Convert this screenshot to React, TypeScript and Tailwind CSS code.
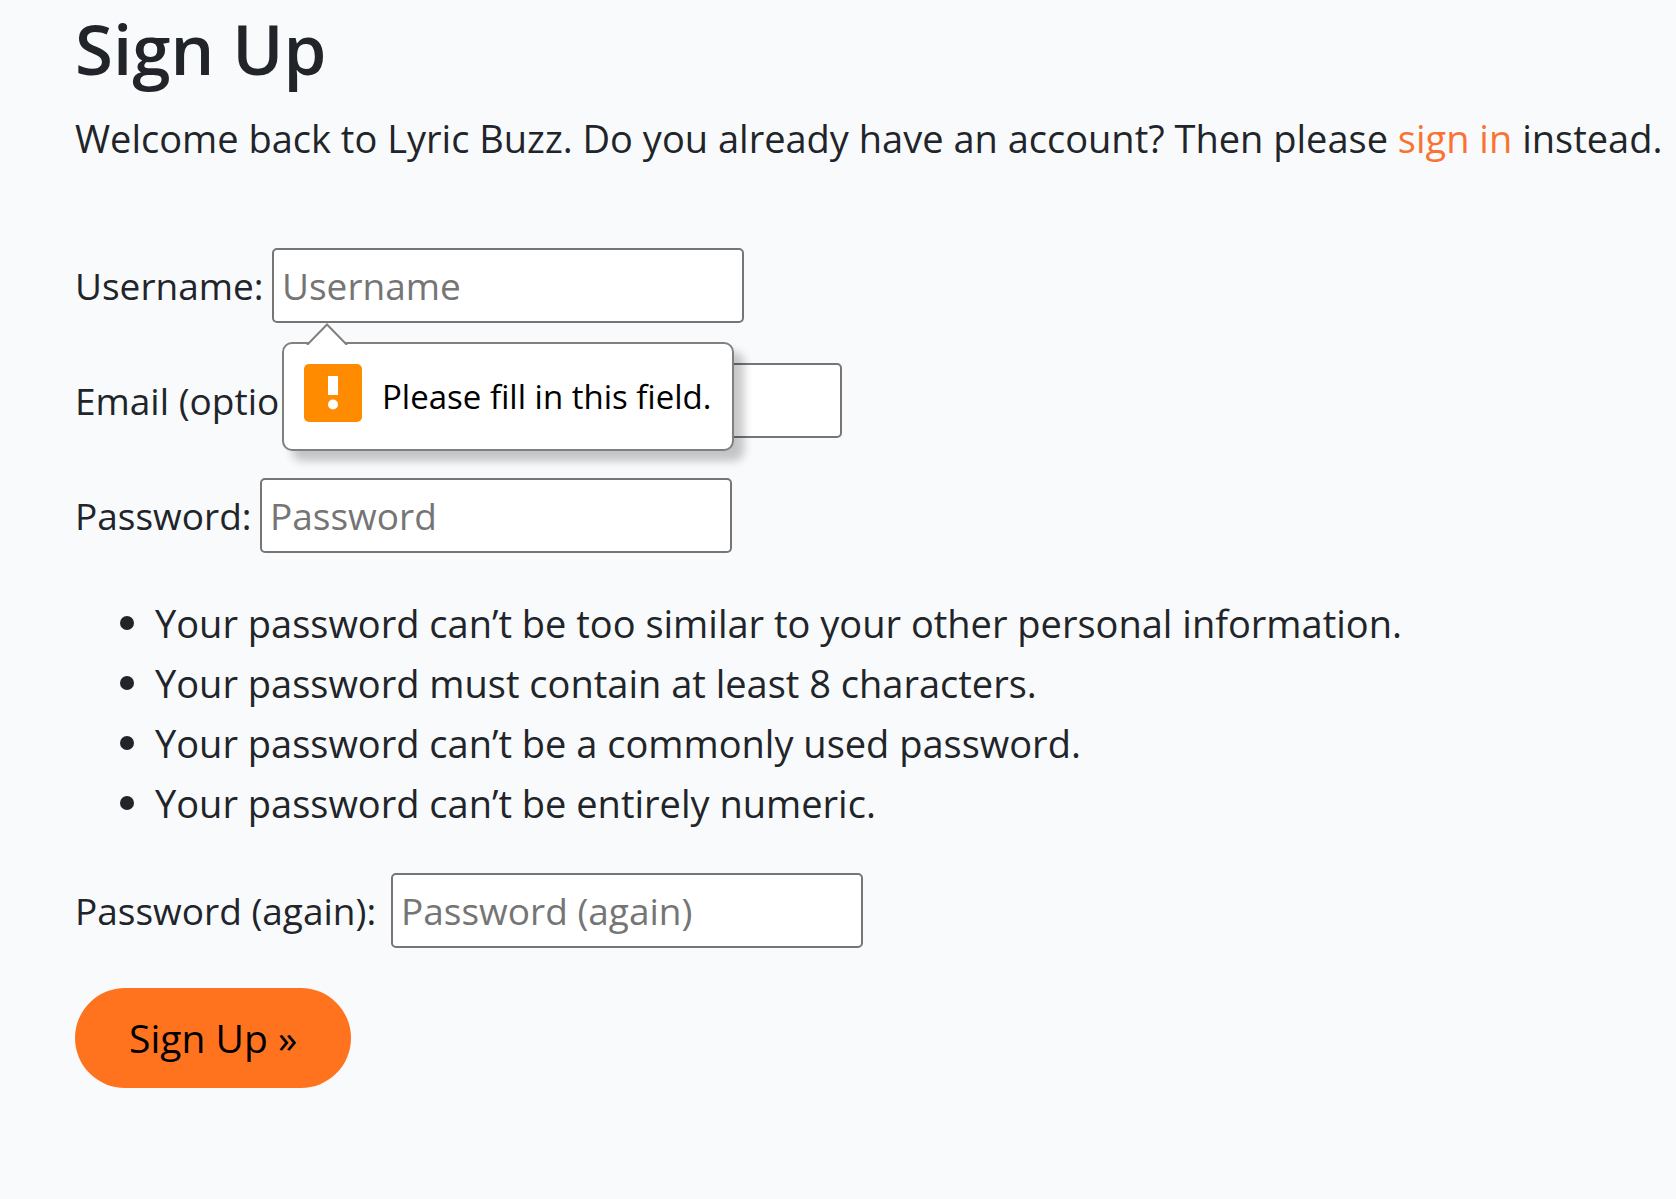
import type { ReactNode } from 'react';

const rules = [
  'Your password can’t be too similar to your other personal information.',
  'Your password must contain at least 8 characters.',
  'Your password can’t be a commonly used password.',
  'Your password can’t be entirely numeric.',
];

type FieldProps = {
  id: string;
  label: string;
  labelWidth: string;
  type: string;
  placeholder: string;
  children?: ReactNode;
};

function Field({ id, label, labelWidth, type, placeholder, children }: FieldProps) {
  return (
    <div className="flex items-center gap-2.5 text-[37px]">
      <label htmlFor={id} className={`whitespace-nowrap ${labelWidth}`}>
        {label}
      </label>
      <div className="relative">
        <input
          id={id}
          type={type}
          placeholder={placeholder}
          className="block h-[75px] w-[472px] rounded-[5px] border-2 border-[#767676] bg-white px-2 leading-[60px] placeholder:text-[#757575]"
        />
        {children}
      </div>
    </div>
  );
}

function ValidationBubble() {
  return (
    <div
      role="alert"
      className="absolute top-[94px] left-[10px] z-10 flex h-[109px] w-[452px] items-start gap-5 rounded-[10px] border-2 border-[#808080] bg-white p-5 text-[33px] leading-[66px] text-black shadow-[10px_10px_10px_rgba(0,0,0,0.22)]"
    >
      <svg className="absolute -top-[21px] left-[22px]" width="42" height="22" viewBox="0 0 42 22" aria-hidden="true">
        <path d="M1 22 L21 1.5 L41 22" fill="#fff" stroke="#808080" strokeWidth="2" />
      </svg>
      <svg className="shrink-0" width="58" height="58" viewBox="0 0 58 58" aria-hidden="true">
        <rect width="58" height="58" rx="5" fill="#ff8c00" />
        <rect x="24" y="12" width="10" height="19" fill="#fff" />
        <circle cx="29" cy="40.5" r="5" fill="#fff" />
      </svg>
      <span className="whitespace-nowrap">Please fill in this field.</span>
    </div>
  );
}

export default function App() {
  return (
    <main className="min-h-screen bg-[#f9fafc] pl-[75px] pb-28 font-['Open_Sans',sans-serif] text-[38px] leading-[60px] text-[#212529]">
      <h1 className="pt-1.5 text-[69px] leading-[84px] font-semibold">Sign Up</h1>
      <p className="mt-[18px] whitespace-nowrap">
        Welcome back to Lyric Buzz. Do you already have an account? Then please{' '}
        <a href="#signin" className="text-[#f97432]">
          sign in
        </a>{' '}
        instead.
      </p>
      <form className="mt-20 flex flex-col items-start gap-10" noValidate>
        <Field id="username" label="Username:" labelWidth="w-[187px]" type="text" placeholder="Username">
          <ValidationBubble />
        </Field>
        <Field id="email" label="Email (optional):" labelWidth="w-[285px]" type="email" placeholder="Email address" />
        <Field id="password" label="Password:" labelWidth="w-[175px]" type="password" placeholder="Password" />
        <ul className="flex flex-col">
          {rules.map((rule) => (
            <li key={rule} className="flex items-center gap-[21px] pl-[45px]">
              <span className="size-[14px] shrink-0 rounded-full bg-[#212529]" />
              {rule}
            </li>
          ))}
        </ul>
        <Field
          id="password2"
          label="Password (again):"
          labelWidth="w-[306px]"
          type="password"
          placeholder="Password (again)"
        />
        <button type="submit" className="h-[100px] rounded-full bg-[#ff731f] px-[54px] text-[39px] text-black">
          Sign Up »
        </button>
      </form>
    </main>
  );
}
